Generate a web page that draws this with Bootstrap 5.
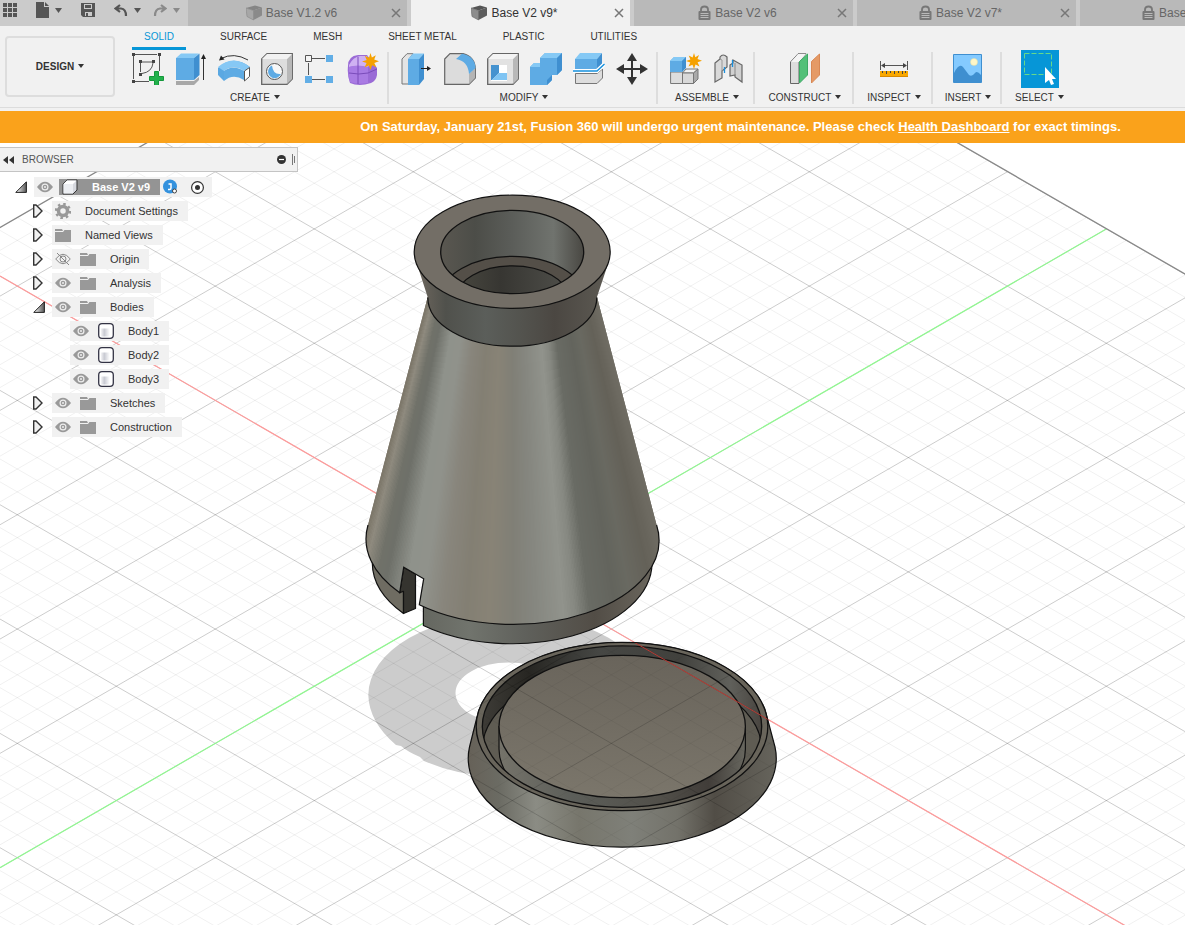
<!DOCTYPE html>
<html lang="en">
<head>
<meta charset="utf-8">
<meta name="viewport" content="width=device-width, initial-scale=1">
<title>Base V2 v9* - Fusion 360</title>
<link rel="stylesheet" href="https://cdn.jsdelivr.net/npm/bootstrap@5.3.0/dist/css/bootstrap.min.css">
<style>
body{font-family:"Liberation Sans",Arial,sans-serif;font-size:11px;line-height:16px;color:#333;background:#fff}
button{font:inherit;color:inherit;background:none;border:0;padding:0}
svg{display:block;flex:none}
.topbar{height:26px;background:#cbcbcb}
.quick{width:188px;height:20px;padding-left:3px;gap:19px;color:#555}
.quick .history{gap:12px}
.quick button{gap:6px}
.quick .disabled-look{color:#8a8a8a}
.doc-tabs{gap:4px}
.doc-tab{flex:0 0 219px;background:#b9b9b9;color:#666;font-size:12px;padding:0 6px 0 4px}
.doc-tab.active{background:#f1f1f1;color:#333}
.doc-tab a{color:inherit;gap:4px}
.ribbon{background:#f1f1f1;height:85px;font-size:10px;border-bottom:3px solid #f1f1f1;box-shadow:inset 0 -1px #dcdcdc}
.workspace{width:110px;height:61px;margin:10px 0 0 5px;border:2px solid #ddd;border-radius:4px;font-weight:bold}
.dropdown-toggle::after{border-top:4px solid;border-left:3px solid transparent;border-right:3px solid transparent;margin-left:4px;vertical-align:2px}
.ribbon-tabs{gap:22px;padding-left:17px;height:26px}
.ribbon-tabs a{color:#333;height:24px;padding:3px 12px 2px;border-bottom:3px solid transparent}
.ribbon-tabs a.active{color:#0696d7;border-color:#0696d7}
.group{height:52px;border-right:2px solid #ddd;padding:0 3px 0 6px}
.group:last-child{border:0}
.group .tools{height:34px}
.tool{width:43px;height:34px}
.group .caption{height:16px;margin-top:4px}
.g-create{width:270px;padding-left:7px;margin-left:4px}
.g-modify{width:269px}
.g-assemble{width:97px}
.g-construct{width:99px}
.g-inspect{width:79px}
.g-insert{width:69px}
.g-select{width:72px}
.notice{background:#faa21b;color:#fff;font-size:13px;font-weight:bold;height:32px;padding-left:296px}
.notice a{color:#fff}
.canvas-area{min-height:340px}
.browser{width:298px;padding-top:4px}
.browser-head{height:25px;font-size:10px;background:#f1f1f1;border:1px solid #c4c4c4;border-left:0;color:#555;padding:0 2px 0 3px}
.browser-head .hide{margin-right:6px}
.tree{padding-top:3px}
.tree ul{padding-left:18px}
.node{height:24px}
.twist{width:34px;padding-left:15px;flex:none}
.chip{height:20px;background:#f1f1f1;padding:0 10px 0 3px}
.chip .thing{margin-left:9px}
.chip .name{margin-left:14px}
.rootname{background:#949494;color:#fff;font-weight:bold;height:16px;margin:0 3px 0 6px;padding:0 10px 0 3px}
</style>
</head>
<body class="d-flex flex-column min-vh-100 overflow-hidden">

<svg width="0" height="0" class="position-absolute" aria-hidden="true">
  <defs>
    <linearGradient id="gTw" x1="0" y1="0" x2="1" y2="0"><stop offset=".2" stop-color="#ddd"/><stop offset="1" stop-color="#555"/></linearGradient>
    <linearGradient id="gBody" x1="0" x2="1" y1="0" y2="0"><stop offset="0" stop-color="#f4f4f6"/><stop offset=".3" stop-color="#c8cad2"/><stop offset=".8" stop-color="#fff"/></linearGradient>
    <symbol id="eye" viewBox="0 0 16 12"><path d="M0 6Q8-4.500 16 6Q8 16.500 0 6Z" fill="#999"/><circle cx="8" cy="6" r="3.500" fill="#eee"/><circle cx="8" cy="6" r="2.300" fill="#999"/><circle cx="8" cy="6" r="1" fill="#eee"/></symbol>
    <symbol id="eyeoff" viewBox="0 0 16 12"><path d="M.7 6Q8-3.500 15.300 6Q8 15.500.7 6Z" fill="none" stroke="#888"/><circle cx="8" cy="6" r="3" fill="none" stroke="#888"/><path d="M2 0L14 12" stroke="#888"/></symbol>
    <symbol id="folder" viewBox="0 0 16 13"><path d="M0 0H7L8 2H0ZM0 3H8L9.500 1H16V13H0Z" fill="#999"/></symbol>
    <symbol id="bodyi" viewBox="0 0 16 16"><path d="M.7 4Q.7.7 4 .7H12Q15.300.7 15.300 4V12Q15.300 15.300 12 15.300H4Q.7 15.300.7 12Z" fill="#fff" stroke="#334" stroke-width="1.300"/><path d="M3 5.500H14V13.500H3Z" fill="url(#gBody)"/></symbol>
    <symbol id="closed" viewBox="0 0 12 14"><path d="M.7 1V13H3L9 7L3 1Z" fill="#f1f1f1" stroke="#333" stroke-width="1.400"/></symbol>
    <symbol id="open" viewBox="0 0 12 12"><path d="M.8 11.400H11.400V.8Z" fill="url(#gTw)" stroke="#222"/></symbol>
    <symbol id="lock" viewBox="0 0 13 16"><path d="M3 7V4.500Q3 1.500 6.500 1.500T10 4.500V7" fill="none" stroke="currentColor" stroke-width="1.800"/><rect x=".5" y="6" width="12" height="9" rx="1" fill="currentColor"/><path d="M2.500 8.500H10.500M2.500 10.500H10.500M2.500 12.500H10.500" stroke="#b9b9b9"/></symbol>
    <symbol id="cube" viewBox="0 0 16 16"><path d="M0 3L9 .5L16 2.500L7.500 5.500Z" fill="#555"/><path d="M0 3L7.500 5.500V15L1 11.500Z" fill="#8d8d8d" stroke="#666" stroke-width=".6"/><path d="M7.500 5.500L16 2.500V10.500L7.500 15Z" fill="#5d5d5d"/></symbol>
    <symbol id="cubeoff" viewBox="0 0 16 16"><path d="M0 3L9 .5L16 2.500L7.500 5.500Z" fill="#858585"/><path d="M0 3L7.500 5.500V15L1 11.500Z" fill="#a7a7a7" stroke="#888" stroke-width=".6"/><path d="M7.500 5.500L16 2.500V10.500L7.500 15Z" fill="#8a8a8a"/></symbol>
    <symbol id="x" viewBox="0 0 10 10"><path d="M1 1L9 9M9 1L1 9" stroke="#777" stroke-width="1.500"/></symbol>
    <symbol id="down" viewBox="0 0 7 5"><path d="M0 0H7L3.500 5Z" fill="currentColor"/></symbol>
    <symbol id="star" viewBox="0 0 16 16"><path d="M8 0L9.300 4.200L13 2L11.500 6L16 7.800L11.600 9.300L13.500 13.500L9.500 11.500L8 16L6.500 11.700L2.500 13.500L4.300 9.500L0 8L4.400 6.500L2.700 2.500L6.600 4.400Z" fill="#f5a100"/></symbol>
  </defs>
</svg>

<header class="topbar d-flex overflow-hidden">
  <div class="quick d-flex align-items-center flex-shrink-0" role="toolbar" aria-label="Quick access">
    <button aria-label="Data panel"><svg width="14" height="14" fill="currentColor"><path d="M0 0h4v4H0zM5 0h4v4H5zM10 0h4v4h-4zM0 5h4v4H0zM5 5h4v4H5zM10 5h4v4h-4zM0 10h4v4H0zM5 10h4v4H5zM10 10h4v4h-4z"/></svg></button>
    <button class="d-flex align-items-center" aria-label="File"><svg width="13" height="16" fill="currentColor"><path d="M0 0H8V5H13V16H0ZM9 0L13 4H9Z"/></svg><svg width="7" height="5"><use href="#down"/></svg></button>
    <button aria-label="Save"><svg width="14" height="14"><path d="M0 0H14V14H2L0 12Z" fill="currentColor"/><path d="M3 1H11V6H3ZM4 9H11V13H4Z" fill="#cbcbcb"/><path d="M4 2H10V5H4ZM5 10H7V13H5Z" fill="currentColor"/></svg></button>
    <div class="history d-flex">
      <button class="d-flex align-items-center" aria-label="Undo"><svg width="14" height="13"><path d="M6 1L1.500 4.500L6 8M2 4.500H7Q12 5 12 12" fill="none" stroke="currentColor" stroke-width="2.200"/></svg><svg width="7" height="5"><use href="#down"/></svg></button>
      <button class="disabled-look d-flex align-items-center" aria-label="Redo"><svg width="14" height="13"><path d="M8 1L12.500 4.500L8 8M12 4.500H7Q2 5 2 12" fill="none" stroke="currentColor" stroke-width="2.200"/></svg><svg width="7" height="5"><use href="#down"/></svg></button>
    </div>
  </div>
  <nav class="doc-tabs d-flex" aria-label="Documents">
    <div class="doc-tab d-flex align-items-center"><a href="#" class="d-flex flex-grow-1 justify-content-center align-items-center text-decoration-none"><svg width="16" height="16"><use href="#cubeoff"/></svg>Base V1.2 v6</a><button aria-label="Close"><svg width="10" height="10"><use href="#x"/></svg></button></div>
    <div class="doc-tab active d-flex align-items-center"><a href="#" class="d-flex flex-grow-1 justify-content-center align-items-center text-decoration-none"><svg width="16" height="16"><use href="#cube"/></svg>Base V2 v9*</a><button aria-label="Close"><svg width="10" height="10"><use href="#x"/></svg></button></div>
    <div class="doc-tab d-flex align-items-center"><a href="#" class="d-flex flex-grow-1 justify-content-center align-items-center text-decoration-none"><svg width="13" height="16" color="#777"><use href="#lock"/></svg>Base V2 v6</a><button aria-label="Close"><svg width="10" height="10"><use href="#x"/></svg></button></div>
    <div class="doc-tab d-flex align-items-center"><a href="#" class="d-flex flex-grow-1 justify-content-center align-items-center text-decoration-none"><svg width="13" height="16" color="#777"><use href="#lock"/></svg>Base V2 v7*</a><button aria-label="Close"><svg width="10" height="10"><use href="#x"/></svg></button></div>
    <div class="doc-tab d-flex align-items-center"><a href="#" class="d-flex flex-grow-1 justify-content-center align-items-center text-decoration-none"><svg width="13" height="16" color="#777"><use href="#lock"/></svg>Base V2 v8*</a><button aria-label="Close"><svg width="10" height="10"><use href="#x"/></svg></button></div>
  </nav>
</header>

<section class="ribbon d-flex flex-shrink-0">
  <button class="workspace dropdown-toggle flex-shrink-0">DESIGN</button>
  <div>
    <nav class="ribbon-tabs d-flex" aria-label="Toolbar tabs">
      <a href="#" class="active text-decoration-none">SOLID</a><a href="#" class="text-decoration-none">SURFACE</a><a href="#" class="text-decoration-none">MESH</a><a href="#" class="text-decoration-none">SHEET METAL</a><a href="#" class="text-decoration-none">PLASTIC</a><a href="#" class="text-decoration-none">UTILITIES</a>
    </nav>
    <div class="d-flex">
      <div class="group g-create d-flex flex-column">
        <div class="tools d-flex">
          <button class="tool d-flex justify-content-center align-items-center" aria-label="Create sketch"><svg width="32" height="32"><path d="M3 1.500H25M1.500 3V26M3 28.500H17M27.500 3V18M10 9H20M8.500 10V19M10 20.500Q20 19 21 10" fill="none" stroke="#555"/><path d="M0 0h3v3H0zM26 0h3v3h-3zM0 27h3v3H0zM7 7h3v3H7zM20 7h3v3h-3zM7 20h3v3H7z" fill="#444"/><path d="M22.500 18.500h4v5h5v4h-5v5h-4v-5h-5v-4h5z" fill="#22b14c" stroke="#14983b"/></svg></button>
          <button class="tool d-flex justify-content-center align-items-center" aria-label="Extrude"><svg width="32" height="32"><path d="M1 28H19L24 24V27L19 32H1Z" fill="#a8a8a8"/><path d="M1 5L6 .5H24L19 5Z" fill="#85c9f5"/><path d="M1 5H19V27H1Z" fill="#5eabe4"/><path d="M19 5L24.500.5V22L19 27Z" fill="#3f8fd0"/><path d="M28.500 27V4" stroke="#333"/><path d="M26 6L28.500 1L31 6Z" fill="#222"/></svg></button>
          <button class="tool d-flex justify-content-center align-items-center" aria-label="Revolve"><svg width="32" height="32"><path d="M0 15Q15 1 32 14L27 17Q15 11 6 17V28L0 22Z" fill="#5aa8e2"/><path d="M0 14Q15 1 32 14L26 18Q15 10 6 18Z" fill="#86c8f5"/><path d="M6 18Q15 11 26 18V27Q15 20 6 28Z" fill="#5eabe4"/><path d="M26.500 18L31.500 14.500V23.500L26.500 28Z" fill="#fff" stroke="#555"/><path d="M3 5.500Q16-1 30 7" fill="none" stroke="#333"/><path d="M1 7.500L3 2.500L6.500 6.500Z" fill="#222"/></svg></button>
          <button class="tool d-flex justify-content-center align-items-center" aria-label="Hole"><svg width="32" height="32"><path d="M.7 6L6 .7H31.300V26L26 31.300H.7Z" fill="#ddd" stroke="#666" stroke-width="1.300"/><path d="M26 6L31 1V26L26 31Z" fill="#b8b8b8"/><path d="M1 6L6 1H31L26 6Z" fill="#f2f2f2"/><circle cx="13.500" cy="18.500" r="8" fill="#f7f7f7" stroke="#555"/><path d="M11 12.500A6.600 6.600 0 1 0 19.800 21Q12 22 11 12.500Z" fill="#5eabe4"/></svg></button>
          <button class="tool d-flex justify-content-center align-items-center" aria-label="Pattern"><svg width="32" height="32"><path d="M8 5.500H21M8 26.500H21M4.500 10V22" stroke="#555"/><path d="M1.500 2.500h6v6h-6z" fill="#f5f5f5" stroke="#555"/><path d="M22 2h7v7h-7zM22 23h7v7h-7zM1 23h7v7H1z" fill="#62aee6"/></svg></button>
          <button class="tool d-flex justify-content-center align-items-center" aria-label="Create form"><svg width="32" height="32"><path d="M1 13Q1 3 11 2H20L30 15V22Q29 28 24 30Q12 34 3 30Q0 22 1 13Z" fill="#9a6bd6"/><path d="M2 12Q6 4 13 3H20L24 12L20 14Q10 12 2 14Z" fill="#cfb2f2"/><path d="M2 14Q10 11 21 14V30Q10 32 3 29Q1 22 2 14Z" fill="#a97be3"/><path d="M11 4V31M2 20Q12 22 21 20L30 16" fill="none" stroke="#7a4cba"/><svg x="15" y="0" width="17" height="17"><use href="#star"/></svg></svg></button>
        </div>
        <button class="caption dropdown-toggle">CREATE</button>
      </div>
      <div class="group g-modify d-flex flex-column">
        <div class="tools d-flex">
          <button class="tool d-flex justify-content-center align-items-center" aria-label="Press pull"><svg width="32" height="32"><path d="M1 6L6 .7H12L8 6V31H1Z" fill="#e4e4e4" stroke="#777"/><path d="M7 6L12 .5H23L18 6Z" fill="#85c9f5"/><path d="M7 6H18V32H7Z" fill="#5eabe4"/><path d="M18 6L23 .5V26L18 32Z" fill="#3f8fd0"/><path d="M20 15.500H27" stroke="#222"/><path d="M26 13L30 15.500L26 18Z" fill="#222"/></svg></button>
          <button class="tool d-flex justify-content-center align-items-center" aria-label="Fillet"><svg width="32" height="32"><path d="M.7 6L6 .7H19Q31 4 31.300 16V25L25 31.300H.7Z" fill="#dcdcdc" stroke="#666" stroke-width="1.200"/><path d="M25 21L31 15V25L25 31Z" fill="#b5b5b5"/><path d="M12 6L18 .7Q31 3 31.500 15L25 21Q24 8 12 6Z" fill="#5eabe4"/></svg></button>
          <button class="tool d-flex justify-content-center align-items-center" aria-label="Shell"><svg width="32" height="32"><path d="M.7 6L6 .7H31.300V26L26 31.300H.7Z" fill="#e2e2e2" stroke="#666" stroke-width="1.300"/><path d="M26 6L31 1V26L26 31Z" fill="#b8b8b8"/><path d="M1 6L6 1H31L26 6Z" fill="#f4f4f4"/><path d="M4 12H20V28H4Z" fill="#fff"/><path d="M4 12H12V20L5 27H4Z" fill="#4592cf"/><path d="M5 27L12 20H20V27Z" fill="#7fc4f3"/></svg></button>
          <button class="tool d-flex justify-content-center align-items-center" aria-label="Combine"><svg width="32" height="32"><path d="M0 14L4 10H10V5L15 0H32V17L27 22H22V27L17 32H0Z" fill="#5eabe4"/><path d="M10 5L15 0H32L27 5ZM0 14L4 10H10V14Z" fill="#85c9f5"/><path d="M27 5L32 0V17L27 22ZM17 27L22 22V27L17 32Z" fill="#3f8fd0"/></svg></button>
          <button class="tool d-flex justify-content-center align-items-center" aria-label="Split body"><svg width="32" height="32"><path d="M2 6L7 0H29L24 6Z" fill="#85c9f5"/><path d="M2 6H24V16H2Z" fill="#5eabe4"/><path d="M24 6L29 0V11L24 16Z" fill="#3f8fd0"/><path d="M2.500 20.500H24L29.500 16V25L24 30.500H2.500Z" fill="#ddd" stroke="#777"/><path d="M0 18H24L31.500 11" fill="none" stroke="#fff" stroke-width="4"/><path d="M0 18H24L31.500 11" fill="none" stroke="#1590dd" stroke-width="1.400"/></svg></button>
          <button class="tool d-flex justify-content-center align-items-center" aria-label="Move"><svg width="32" height="32" fill="#333"><path d="M15 6H17V15H26V17H17V26H15V17H6V15H15Z"/><path d="M16 0L21 8H11ZM16 32L11 24H21ZM0 16L8 11V21ZM32 16L24 21V11Z"/></svg></button>
        </div>
        <button class="caption dropdown-toggle">MODIFY</button>
      </div>
      <div class="group g-assemble d-flex flex-column">
        <div class="tools d-flex">
          <button class="tool d-flex justify-content-center align-items-center" aria-label="New component"><svg width="32" height="32"><path d="M.6 19H12.500V30.500H.6Z" fill="#ddd" stroke="#777"/><path d="M12.500 20L16 16H28L23.500 20Z" fill="#f3f3f3" stroke="#777"/><path d="M12.500 20H23.500V30.500H12.500Z" fill="#d8d8d8" stroke="#777"/><path d="M23.500 20L28 16V26L23.500 30.500Z" fill="#aaa" stroke="#777"/><path d="M0 8L4 4H16V14L12 19H0Z" fill="#5eabe4"/><path d="M0 8L4 4H16L12 8Z" fill="#85c9f5"/><path d="M12 8L16 4V15L12 19Z" fill="#3f8fd0"/><svg x="16" y="0" width="16" height="16"><use href="#star"/></svg></svg></button>
          <button class="tool d-flex justify-content-center align-items-center" aria-label="Joint"><svg width="32" height="32"><path d="M2 10L7 6V4Q10 0 14 4V14L9 18V25L2 29Z" fill="#d9d9d9" stroke="#666" stroke-width="1.200"/><path d="M7 6L9 7V18" fill="none" stroke="#999"/><path d="M17 12L20 10V7L29 12V29L22 24V22L17 23Z" fill="#d0d0d0" stroke="#666" stroke-width="1.200"/><path d="M22 10V22" stroke="#888"/><path d="M11.500 14V20M19.500 7V14" stroke="#1a8fdc" stroke-width="1.300"/></svg></button>
        </div>
        <button class="caption dropdown-toggle">ASSEMBLE</button>
      </div>
      <div class="group g-construct d-flex flex-column">
        <div class="tools d-flex justify-content-center">
          <button class="tool d-flex justify-content-center align-items-center" aria-label="Offset plane"><svg width="32" height="32"><path d="M1.500 9L9 .8H17L10 9V30.500H1.500Z" fill="#ddd" stroke="#666"/><path d="M2 9L9 1H17L10 9Z" fill="#f4f4f4"/><path d="M10.500 8.500L18.500 1V22L10.500 30Z" fill="#52c078" stroke="#3da864"/><path d="M22.500 8.500L30.500 1V22L22.500 30Z" fill="#e59a66" stroke="#d98854"/></svg></button>
        </div>
        <button class="caption dropdown-toggle">CONSTRUCT</button>
      </div>
      <div class="group g-inspect d-flex flex-column">
        <div class="tools d-flex justify-content-center">
          <button class="tool d-flex justify-content-center align-items-center" aria-label="Measure"><svg width="32" height="32"><path d="M2.500 8V17M29.500 8V17M4 12.500H28" stroke="#555"/><path d="M3 12.500L7 10V15ZM29 12.500L25 10V15Z" fill="#444"/><path d="M2 18H30V24H2Z" fill="#f9a800"/><path d="M2 23.500H30" stroke="#d88900"/><path d="M4.500 18V20M8.500 18V21M12.500 18V20M16.500 18V21M20.500 18V20M24.500 18V21M27.500 18V20" stroke="#444"/></svg></button>
        </div>
        <button class="caption dropdown-toggle">INSPECT</button>
      </div>
      <div class="group g-insert d-flex flex-column">
        <div class="tools d-flex justify-content-center">
          <button class="tool d-flex justify-content-center align-items-center" aria-label="Insert image"><svg width="32" height="32"><path d="M1.500 1.500H29.500V29.500H1.500Z" fill="#84caff" stroke="#3f8fd0"/><path d="M2 20Q7 10 11 14L17 22Q20 24 23 20Q25 17 29 22V29H2Z" fill="#3f8fd0"/><circle cx="22" cy="9" r="3.500" fill="#fff6c8" stroke="#e9dfa0" stroke-width=".5"/></svg></button>
        </div>
        <button class="caption dropdown-toggle">INSERT</button>
      </div>
      <div class="group g-select d-flex flex-column">
        <div class="tools d-flex justify-content-center">
          <button class="tool d-flex justify-content-center align-items-center" aria-label="Select"><svg width="38" height="38"><path d="M0 0H38V38H0Z" fill="#0696d7"/><path d="M3.500 3.500H30.500V24.500H3.500Z" fill="none" stroke="#66d98a" stroke-dasharray="5 2"/><path d="M24 17V33L28 30L30 35L33 34L31 29H35Z" fill="#fff"/></svg></button>
        </div>
        <button class="caption dropdown-toggle">SELECT</button>
      </div>
    </div>
  </div>
</section>

<div class="notice d-flex flex-shrink-0 justify-content-center align-items-center" role="status"><span>On Saturday, January 21st, Fusion 360 will undergo urgent maintenance. Please check <a href="#">Health Dashboard</a> for exact timings.</span></div>

<main class="canvas-area position-relative flex-grow-1 overflow-hidden">
  <svg class="position-absolute top-0 start-0 w-100 h-100" viewBox="0 143 1185 782" preserveAspectRatio="xMinYMin slice" role="img" aria-label="3D view of the base and its cap">
    <defs>
      <clipPath id="cpGrid"><path d="M-43 252.400L552.300-91.300L2500 1033.400V1500H-43Z"/></clipPath>
      <clipPath id="cpCone"><path d="M427.700 297L368 525A146 84.200 0 0 0 399.700 592.700L403.700 567.300L423.700 578.700L419.300 604.800A146 84.200 0 0 0 656.600 525L597 297Z"/></clipPath>
      <clipPath id="cpBore"><ellipse cx="512.200" cy="252" rx="71.500" ry="41.700"/></clipPath>
      <clipPath id="cpWell"><ellipse cx="622" cy="726.600" rx="139.700" ry="80.700"/></clipPath>
      <path id="capHull" d="M469.500 747L477 717A146 84.200 0 0 1 767 717L775 747A154 88.900 0 1 1 469.500 747Z"/>
      <clipPath id="cpCap"><use href="#capHull"/></clipPath>
      <linearGradient id="gNeck"><stop offset="0" stop-color="#6e675e"/><stop offset=".15" stop-color="#50514c"/><stop offset=".36" stop-color="#5b5e5a"/><stop offset=".55" stop-color="#53534e"/><stop offset=".72" stop-color="#4b4742"/><stop offset="1" stop-color="#5d5a53"/></linearGradient>
      <linearGradient id="gBore"><stop offset="0" stop-color="#5b5851"/><stop offset=".25" stop-color="#4c4d48"/><stop offset=".5" stop-color="#5b5d59"/><stop offset=".78" stop-color="#70736e"/><stop offset="1" stop-color="#46443f"/></linearGradient>
      <linearGradient id="gHole"><stop offset="0" stop-color="#48473f"/><stop offset=".4" stop-color="#373632"/><stop offset="1" stop-color="#4f4f4a"/></linearGradient>
      <linearGradient id="gRing"><stop offset="0" stop-color="#656760"/><stop offset=".2" stop-color="#71746d"/><stop offset=".45" stop-color="#5f605b"/><stop offset=".75" stop-color="#524d46"/><stop offset="1" stop-color="#6a665d"/></linearGradient>
      <linearGradient id="gCap"><stop offset="0" stop-color="#666158"/><stop offset=".1" stop-color="#6b6b63"/><stop offset=".22" stop-color="#8b8c84"/><stop offset=".36" stop-color="#77766c"/><stop offset=".53" stop-color="#7f8079"/><stop offset=".68" stop-color="#73726a"/><stop offset=".8" stop-color="#514d46"/><stop offset="1" stop-color="#66645c"/></linearGradient>
      <linearGradient id="gWall"><stop offset="0" stop-color="#3f3d38"/><stop offset=".17" stop-color="#272622"/><stop offset=".42" stop-color="#464744"/><stop offset=".7" stop-color="#41413d"/><stop offset=".88" stop-color="#60605b"/><stop offset="1" stop-color="#47433e"/></linearGradient>
      <linearGradient id="gDisc" x1=".5" y1="0" x2=".4" y2="1"><stop offset="0" stop-color="#69645b"/><stop offset="1" stop-color="#7b766b"/></linearGradient>
      <linearGradient id="gSide"><stop offset="0" stop-color="#75736a"/><stop offset=".3" stop-color="#5c5e59"/><stop offset=".65" stop-color="#52504a"/><stop offset=".85" stop-color="#413d39"/><stop offset="1" stop-color="#68675f"/></linearGradient>
    </defs>
    <path fill="#ccc" fill-rule="evenodd" d="M368.300 695A140.700 81 0 0 1 649.700 695A140.700 81 0 0 1 424 761L420 757Q408 752 401 746L396 745Q369 722 368.300 695ZM455.500 693A53 30.500 0 0 0 561.500 693A53 30.500 0 0 0 455.500 693Z"/>
    <g clip-path="url(#cpGrid)" fill="none">
      <path id="minorLines" stroke="#000" stroke-opacity=".06"/>
      <path id="majorLines" stroke="#000" stroke-opacity=".2"/>
      <path d="M0 276.100L1185 960.200" stroke="#ff9a9a" stroke-width="1.200"/>
      <path d="M0 867.700L1106.300 229" stroke="#90f890" stroke-width="1.200"/>
    </g>
    <path d="M-43 252.400L552.300-91.300L2500 1033.400" fill="none" stroke="#888" stroke-width="1.300"/>

    <!-- base: lower ring, cone, neck and bore -->
    <g stroke="#111" stroke-width="1.200" stroke-linejoin="round">
      <path d="M372.300 563A140 80.800 0 0 0 403.500 613.500V585L372.300 550Z" fill="#6f6c62"/>
      <path d="M423.400 600V625.500A140 80.800 0 0 0 652 563V540L512 600Z" fill="url(#gRing)"/>
      <path d="M403.700 567.300L415.500 574V608.500L403.500 613.500V591.300L399.700 592.700Z" fill="#35342f"/>
    </g>
    <g clip-path="url(#cpCone)" id="coneShade" shape-rendering="crispEdges"></g>
    <path fill="none" stroke="#111" stroke-width="1.200" d="M368 525A146 84.200 0 0 0 399.700 592.700L403.700 567.300L423.700 578.700L419.300 604.800A146 84.200 0 0 0 656.600 525"/>
    <path d="M417 264L427.800 297.400A84.500 48.800 0 0 0 596.800 297.400L608 264Z" fill="url(#gNeck)"/>
    <path d="M427.800 297.400A84.500 48.800 0 0 0 596.800 297.400" fill="none" stroke="#111" stroke-width="1.200"/>
    <ellipse cx="512.200" cy="251.800" rx="98" ry="56.600" fill="#736e66" stroke="#111" stroke-width="1.200"/>
    <g clip-path="url(#cpBore)" stroke="#111" stroke-width="1.200">
      <rect x="438" y="208" width="148" height="90" fill="url(#gBore)" stroke="none"/>
      <ellipse cx="512.200" cy="297.600" rx="71.500" ry="41.300" fill="#544f48"/>
      <ellipse cx="512.200" cy="298" rx="56" ry="32.200" fill="url(#gHole)"/>
    </g>
    <ellipse cx="512.200" cy="252" rx="71.500" ry="41.700" fill="none" stroke="#111" stroke-width="1.300"/>

    <!-- cap -->
    <use href="#capHull" fill="url(#gCap)" stroke="#111" stroke-width="1.200"/>
    <ellipse cx="622" cy="726.500" rx="145.800" ry="84.200" fill="#69655b" stroke="#111" stroke-width="1.300"/>
    <g clip-path="url(#cpWell)" stroke="#111" stroke-width="1.200">
      <rect x="480" y="640" width="284" height="170" fill="url(#gWall)" stroke="none"/>
      <ellipse cx="622" cy="749" rx="139.700" ry="80.700" fill="#5f5c53"/>
      <path d="M499 726.500V749A123.200 71.200 0 0 0 745.400 749V726.500Z" fill="url(#gSide)"/>
    </g>
    <ellipse cx="622" cy="726.600" rx="139.700" ry="80.700" fill="none" stroke="#111" stroke-width="1.300"/>
    <ellipse cx="622.200" cy="726.500" rx="123.200" ry="71.200" fill="url(#gDisc)" stroke="#111" stroke-width="1.300"/>
    <g clip-path="url(#cpCap)" fill="none">
      <use href="#minorLines" opacity=".7"/><use href="#majorLines" opacity=".8"/>
      <path d="M600 622.500L790 732.200" stroke="#b83a34"/>
    </g>
  </svg>

  <aside class="browser position-relative">
    <div class="browser-head d-flex align-items-center">
      <button aria-label="Collapse panel"><svg width="11" height="8"><path d="M5 0V8L0 4ZM11 0V8L6 4Z" fill="#333"/></svg></button>
      <span class="ms-2 flex-grow-1">BROWSER</span>
      <button aria-label="Hide panel" class="hide"><svg width="9" height="9"><circle cx="4.500" cy="4.500" r="4.500" fill="#333"/><path d="M2 4.500H7" stroke="#fff" stroke-width="1.200"/></svg></button>
      <svg width="3" height="11"><path d="M.5 0V11M2.500 2V9" stroke="#777"/></svg>
    </div>
    <div class="tree">
      <div class="node d-flex align-items-center"><button class="twist" aria-label="Collapse"><svg width="12" height="12"><use href="#open"/></svg></button>
        <div class="chip d-flex align-items-center pe-2"><button aria-label="Visibility"><svg width="16" height="12"><use href="#eye"/></svg></button>
          <span class="rootname d-flex align-items-center"><svg width="16" height="16"><path d="M1 5L5 1H15V11L11 15H1Z" fill="#d6d8de" stroke="#333"/><path d="M1.500 5L5 1.500H14.500L11 5Z" fill="#fff"/><path d="M1.500 5H11V14.500H1.500Z" fill="#eceef2"/></svg><span class="name">Base V2 v9</span></span>
          <svg width="16" height="16"><circle cx="7" cy="7.500" r="7" fill="#3492de"/><path d="M5.500 5H8V9Q8 10.500 6.500 10.500H5" fill="none" stroke="#fff" stroke-width="1.500"/><circle cx="11.500" cy="12" r="2" fill="#fff" stroke="#444"/></svg>
          <button class="ms-2 ps-1" aria-label="Activate"><svg width="13" height="13"><circle cx="6.500" cy="6.500" r="5.900" fill="#fff" stroke="#333" stroke-width="1.200"/><circle cx="6.500" cy="6.500" r="2.500" fill="#333"/></svg></button>
        </div>
      </div>
      <ul class="list-unstyled m-0" id="tree"></ul>
    </div>
  </aside>
</main>

<script src="https://cdn.jsdelivr.net/npm/bootstrap@5.3.0/dist/js/bootstrap.bundle.min.js"></script>
<script>
// browser tree: [name, icon, visibility icon, children]
const use = (id, w, h) => `<svg width="${w}" height="${h}"><use href="#${id}"/></svg>`;
const gear = '<svg width="16" height="16"><circle cx="8" cy="8" r="4.500" fill="none" stroke="#999" stroke-width="3.500"/><circle cx="8" cy="8" r="7" fill="none" stroke="#999" stroke-width="2.400" stroke-dasharray="2.500 3" /></svg>';
const bodies = [1, 2, 3].map(n => ['Body' + n, use('bodyi', 16, 16), 'eye']);
const folder = use('folder', 16, 13);
const items = [
  ['Document Settings', gear], ['Named Views', folder], ['Origin', folder, 'eyeoff'],
  ['Analysis', folder, 'eye'], ['Bodies', folder, 'eye', bodies],
  ['Sketches', folder, 'eye'], ['Construction', folder, 'eye']
];
const row = ([name, icon, eye, kids], leaf) => `<li><div class="node d-flex align-items-center">` +
  (leaf ? '<span class="twist"></span>' : `<button class="twist" aria-label="Toggle ${name}">${kids ? use('open', 12, 12) : use('closed', 12, 14)}</button>`) +
  `<div class="chip d-flex align-items-center">` +
  (eye ? `<button aria-label="Visibility of ${name}">${use(eye, 16, 12)}</button>` : '') +
  `<span class="${eye ? 'thing' : ''}">${icon}</span><span class="name">${name}</span></div></div>` +
  (kids ? `<ul class="list-unstyled m-0">${kids.map(k => row(k, true)).join('')}</ul>` : '') + '</li>';
document.getElementById('tree').innerHTML = items.map(i => row(i, false)).join('');

// ground grid: two line families at 30 degrees around the origin
const slope = 0.57735, step = 22.864;
let minor = '', major = '';
for (let k = -60; k <= 60; k++) {
  const a = 276.1 + k * step, b = 867.7 + k * step;
  const seg = `M-50 ${b + 50 * slope}L1300 ${b - 1300 * slope}M-50 ${a - 50 * slope}L1300 ${a + 1300 * slope}`;
  if (k % 5) minor += seg; else major += seg;
}
document.getElementById('minorLines').setAttribute('d', minor);
document.getElementById('majorLines').setAttribute('d', major);

// cone shading: wedges fanning out from the apex
const stops = [[-1, 125, 119, 106], [-.95, 142, 138, 126], [-.86, 112, 113, 105], [-.8, 110, 112, 105], [-.66, 143, 146, 139], [-.55, 144, 146, 139], [-.42, 136, 133, 124], [-.28, 131, 127, 115],
  [-.14, 136, 131, 118], [0, 128, 127, 118], [.12, 133, 134, 127], [.3, 145, 147, 140], [.37, 134, 136, 129], [.46, 105, 107, 100], [.62, 99, 100, 93], [.72, 105, 105, 97], [.86, 100, 97, 88], [1, 112, 109, 100]];
let wedges = '';
for (let i = -104; i < 104; i++) {
  const t = Math.max(-1, Math.min(1, i / 100));
  let j = 0; while (j < stops.length - 2 && stops[j + 1][0] < t) j++;
  const p = stops[j], q = stops[j + 1], f = (t - p[0]) / (q[0] - p[0]);
  const c = [1, 2, 3].map(n => Math.round(p[n] + (q[n] - p[n]) * f));
  const w = x => 512.3 + x / 100 * 172;
  wedges += `<path d="M512.3-19L${w(i)} 630H${w(i + 2)}Z" fill="rgb(${c})"/>`;
}
document.getElementById('coneShade').innerHTML = wedges;
</script>
</body>
</html>
